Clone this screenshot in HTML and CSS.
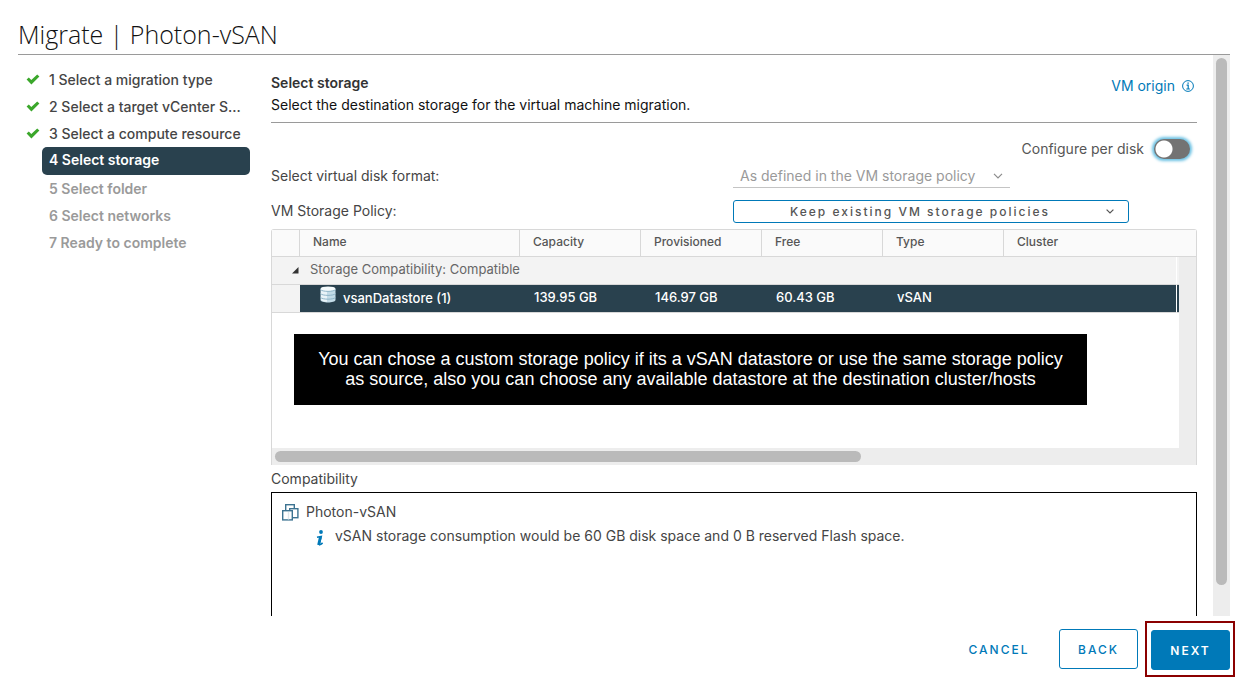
FILE: index.html
```
<!DOCTYPE html>
<html lang="en">
<head>
	<meta charset="UTF-8">
	<title>Migrate | Photon-vSAN</title>
	<link rel="stylesheet" href="styles.css">
</head>
<body>
	<div class="wizard">
		<header class="wizard-header">
			<h1>Migrate | Photon-vSAN</h1>
		</header>
		<div class="wizard-body">
			<nav class="steps">
				<ol>
					<li class="done"><svg width="14" height="11" viewBox="0 0 14 11"><path d="M0.6 5.4 2.8 3.4 5.3 5.9 11.2 0.6 13.4 2.6 5.4 10.4z" fill="#3ba72b"/></svg><a href="#">1 Select a migration type</a></li>
					<li class="done"><svg width="14" height="11" viewBox="0 0 14 11"><path d="M0.6 5.4 2.8 3.4 5.3 5.9 11.2 0.6 13.4 2.6 5.4 10.4z" fill="#3ba72b"/></svg><a href="#">2 Select a target vCenter S...</a></li>
					<li class="done"><svg width="14" height="11" viewBox="0 0 14 11"><path d="M0.6 5.4 2.8 3.4 5.3 5.9 11.2 0.6 13.4 2.6 5.4 10.4z" fill="#3ba72b"/></svg><a href="#">3 Select a compute resource</a></li>
					<li class="current"><a href="#">4 Select storage</a></li>
					<li><span>5 Select folder</span></li>
					<li><span>6 Select networks</span></li>
					<li><span>7 Ready to complete</span></li>
				</ol>
			</nav>
			<main class="page">
				<div class="page-title">
					<div>
						<h2>Select storage</h2>
						<p>Select the destination storage for the virtual machine migration.</p>
					</div>
					<a href="#" class="origin">VM origin
						<svg width="12" height="12" viewBox="0 0 12 12" fill="none" stroke="#0079b8"><circle cx="6" cy="6" r="5.4"/><path d="M4.6 5.2H6.2V8.8M4.3 9H7.9M5.4 3.1H6.8" stroke-width="1.2"/></svg>
					</a>
				</div>
				<div class="per-disk">
					<label for="perDisk">Configure per disk</label>
					<input type="checkbox" id="perDisk" class="toggle">
				</div>
				<div class="form-row">
					<label for="format">Select virtual disk format:</label>
					<div class="select format">
						<select id="format" disabled><option>As defined in the VM storage policy</option></select>
						<svg width="10" height="6" viewBox="0 0 10 6"><path d="M1 0.8 5 4.8 9 0.8" fill="none" stroke="#8c8c8c" stroke-width="1.2"/></svg>
					</div>
				</div>
				<div class="form-row policy-row">
					<label for="policy">VM Storage Policy:</label>
					<div class="select policy">
						<select id="policy"><option>Keep existing VM storage policies</option></select>
						<svg width="8" height="5" viewBox="0 0 8 5"><path d="M0.6 0.6 4 4 7.4 0.6" fill="none" stroke="#565656" stroke-width="1.2"/></svg>
					</div>
				</div>
				<div class="grid">
					<table>
						<colgroup>
							<col class="c-icon"><col class="c-name"><col class="c-num"><col class="c-num"><col class="c-num"><col class="c-num"><col><col class="c-edge"><col class="c-track">
						</colgroup>
						<thead>
							<tr><th></th><th>Name</th><th>Capacity</th><th>Provisioned</th><th>Free</th><th>Type</th><th colspan="3">Cluster</th></tr>
						</thead>
						<tbody>
							<tr class="group">
								<td class="arrow"><svg width="7" height="7" viewBox="0 0 7 7"><path d="M6.5 0V6.5H0z" fill="#333"/></svg></td>
								<td colspan="6">Storage Compatibility: Compatible</td>
								<td class="edge"></td>
								<td class="track"></td>
							</tr>
							<tr class="selected">
								<td></td>
								<td><div class="store">
									<svg width="16" height="17" viewBox="0 0 16 17"><path d="M0.5 3V14C0.5 17.3 15.5 17.3 15.5 14V3z" fill="#c3dbe7"/><path d="M1 3.2V14C3 15.5 5 15.8 7 15.8V3z" fill="#e9f3f8"/><ellipse cx="8" cy="2.8" rx="7.5" ry="2.4" fill="#f4fafc"/><path d="M0.5 3.5C2 6 14 6 15.5 3.5M0.5 7.5C2 10 14 10 15.5 7.5M0.5 11.3C2 13.8 14 13.8 15.5 11.3" fill="none" stroke="#8fb5c8"/></svg>
									<span>vsanDatastore (1)</span>
								</div></td>
								<td>139.95 GB</td>
								<td>146.97 GB</td>
								<td>60.43 GB</td>
								<td>vSAN</td>
								<td></td>
								<td class="edge"></td>
								<td class="track"></td>
							</tr>
							<tr class="blank"><td colspan="8"></td><td class="track"></td></tr>
						</tbody>
					</table>
					<div class="hscroll"><div class="hthumb"></div></div>
					<p class="callout">You can chose a custom storage policy if its a vSAN datastore or use the same storage policy<br>as source, also you can choose any available datastore at the destination cluster/hosts</p>
				</div>
				<h3>Compatibility</h3>
				<div class="compat">
					<div class="compat-vm">
						<svg width="17" height="17" viewBox="0 0 17 17" fill="#fff" stroke="#3d7391" stroke-width="1.4"><rect x="3.7" y="0.7" width="8.6" height="8"/><rect x="7.7" y="4.7" width="8.2" height="9"/><rect x="0.7" y="6.7" width="9.6" height="9.2"/><path d="M6.5 8V15.5" stroke="#dfe7eb"/></svg>
						<span>Photon-vSAN</span>
					</div>
					<div class="compat-info">
						<svg width="8" height="17" viewBox="0 0 8 17"><circle cx="5" cy="2" r="1.9" fill="#0079b8"/><path d="M1 7.2 5.3 6.4 3.2 14.2C3 15.4 4.8 14.6 6.6 12.9" fill="none" stroke="#0079b8" stroke-width="1.5"/><path d="M4.4 7 2.6 15" stroke="#0079b8" stroke-width="2.8"/></svg>
						<span>vSAN storage consumption would be 60 GB disk space and 0 B reserved Flash space.</span>
					</div>
				</div>
			</main>
			<div class="vscroll"><div class="vthumb"></div></div>
		</div>
		<footer class="wizard-footer">
			<button type="button" class="btn link">CANCEL</button>
			<button type="button" class="btn outline">BACK</button>
			<div class="marked"><button type="button" class="btn primary">NEXT</button></div>
		</footer>
	</div>
</body>
</html>
```
FILE: styles.css
```
*{margin:0;padding:0;box-sizing:border-box;}
body{
	font-family:Inter,"Open Sans",sans-serif;
	font-size:14px;
	line-height:20px;
	color:#454545;
	background:#fff;
}
h1,h2,h3{font-weight:400;}
a{color:inherit;text-decoration:none;}
svg{flex:none;display:block;}
.wizard{
	height:100vh;
	display:flex;
	flex-direction:column;
}
.wizard-header{
	margin:0 19px 0 18px;
	padding:18px 0 4px;
	border-bottom:1px solid #9a9a9a;
}
.wizard-header h1{
	font-family:"Open Sans",sans-serif;
	font-weight:300;
	font-size:25px;
	line-height:32px;
	color:#111;
}
.wizard-body{
	flex:1;
	min-height:0;
	display:flex;
	margin:0 19px 0 18px;
}

/* steps */
.steps{
	width:232px;
	margin-right:21px;
	padding-top:11px;
	flex:none;
}
.steps ol{list-style:none;}
.steps li{
	height:27px;
	margin-left:24px;
	padding-left:7px;
	display:flex;
	align-items:center;
	font-weight:600;
	color:#9a9a9a;
}
.steps li.done{
	margin-left:8px;
	padding-left:0;
	gap:9px;
	font-weight:500;
	color:#454545;
}
.steps li a{white-space:nowrap;}
.steps li.current{
	height:28px;
	padding-bottom:2px;
	background:#29414e;
	border-radius:5px;
	color:#fff;
}

/* page */
.page{
	flex:1;
	min-width:0;
	display:flex;
	flex-direction:column;
	overflow:hidden;
}
.page-title{
	display:flex;
	justify-content:space-between;
	padding:18px 3px 5px 0;
	border-bottom:1px solid #9a9a9a;
}
.page-title h2{
	font-size:14px;
	font-weight:600;
	line-height:20px;
	color:#333;
}
.page-title p{line-height:24px;color:#111;}
.origin{
	display:flex;
	align-items:center;
	gap:7px;
	height:26px;
	color:#0079b8;
}
.per-disk{
	display:flex;
	justify-content:flex-end;
	align-items:center;
	gap:10px;
	height:31px;
	margin-top:10px;
	padding-right:7px;
	color:#565656;
}
.toggle{
	appearance:none;
	width:36px;
	height:20px;
	border-radius:10px;
	background:radial-gradient(circle at 10px 10px,#fff 8px,transparent 9px) #737373;
	box-shadow:0 0 3px 2px #6bc1e3;
}
.form-row{
	display:grid;
	grid-template-columns:1fr 1fr;
	align-items:center;
	height:24px;
	padding-right:2px;
}
.policy-row{margin:11px 0 6px;}
.select{display:grid;align-items:center;}
.select select,.select svg{grid-area:1/1;}
.select select{
	appearance:none;
	width:100%;
	background:transparent;
	font-family:inherit;
	outline:none;
}
.select svg{justify-self:end;pointer-events:none;}
.format{width:277px;}
.format select{
	height:24px;
	border:none;
	border-bottom:1px solid #c4c4c4;
	padding-left:7px;
	font-size:14px;
	color:#9a9a9a;
	opacity:1;
}
.format svg{margin-right:7px;}
.policy{width:396px;}
.policy select{
	height:23px;
	border:1px solid #0079b8;
	border-radius:3px;
	padding-left:56px;
	font-size:12px;
	font-weight:500;
	letter-spacing:2px;
	color:#565656;
}
.policy svg{margin-right:15px;}

/* datastore grid */
.grid{
	position:relative;
	border:1px solid #d8d8d8;
	border-bottom:none;
	border-radius:3px 3px 0 0;
	font-size:13px;
}
table{
	width:100%;
	table-layout:fixed;
	border-collapse:separate;
	border-spacing:0;
}
.c-icon{width:28px;}
.c-name{width:220px;}
.c-num{width:121px;}
.c-edge{width:3px;}
.c-track{width:17px;}
th{
	height:27px;
	padding:0 13px 3px;
	text-align:left;
	font-size:12px;
	font-weight:500;
	background:#fafafa;
	border-bottom:1px solid #d8d8d8;
	border-right:1px solid #d8d8d8;
	color:#565656;
}
th:last-child{border-right:none;}
td{
	height:28px;
	padding:0 0 3px 14px;
	border-bottom:1px solid #d8d8d8;
}
.group td{
	padding-left:10px;
	background:#f3f3f3;
	color:#666;
}
.group .arrow{padding:0 0 0 20px;}
.group .edge{border-left:1px solid #fff;padding:0;}
.selected td{
	background:#29414e;
	color:#fff;
	font-weight:500;
}
.selected td:first-child{background:#f3f3f3;}
.selected td:nth-child(2){padding-left:20px;}
.selected .edge{border-left:1px solid #fff;padding:0;}
.store{
	display:flex;
	gap:7px;
}
.store span{padding-top:2px;}
.blank td{height:135px;border:none;}
.grid .track{background:#ededed;border:none;padding:0;}
.hscroll{
	height:17px;
	padding:3px 20px 3px 3px;
	background:#ededed;
}
.hthumb{
	width:65%;
	height:11px;
	border-radius:6px;
	background:#bababa;
}
/* note lies over the empty rows */
.callout{
	position:absolute;
	top:104px;
	left:22px;
	width:793px;
	padding:15px 0 16px;
	background:#000;
	color:#fff;
	font:18px/20px "Liberation Sans",Arial,sans-serif;
	text-align:center;
	white-space:nowrap;
}
.page h3{
	font-size:14px;
	line-height:27px;
}
.compat{
	flex:1;
	border:1px solid #000;
	border-bottom:none;
	padding:9px 10px;
}
.compat-vm{display:flex;align-items:center;gap:7px;}
.compat-info{
	display:flex;
	gap:11px;
	margin:4px 0 0 34px;
}
.compat-info svg{margin-top:4px;}
.vscroll{
	width:17px;
	margin-left:16px;
	padding:3px;
	background:#ededed;
}
.vthumb{
	height:95%;
	border-radius:6px;
	background:#bababa;
}

/* footer */
.wizard-footer{
	display:flex;
	justify-content:flex-end;
	align-items:center;
	height:66px;
	padding:0 14px 0 0;
}
.btn{
	height:40px;
	border:1px solid #0079b8;
	border-radius:3px;
	background:#fff;
	color:#0079b8;
	font-family:inherit;
	font-size:12px;
	font-weight:500;
	letter-spacing:2px;
	cursor:pointer;
}
.link{border-color:transparent;width:84px;margin-right:18px;}
.outline{width:79px;margin-right:7px;}
.primary{width:79px;background:#0079b8;color:#fff;font-weight:600;display:block;}
.marked{
	border:2px solid #8b0000;
	padding:7px 3px 5px 4px;
}
```
